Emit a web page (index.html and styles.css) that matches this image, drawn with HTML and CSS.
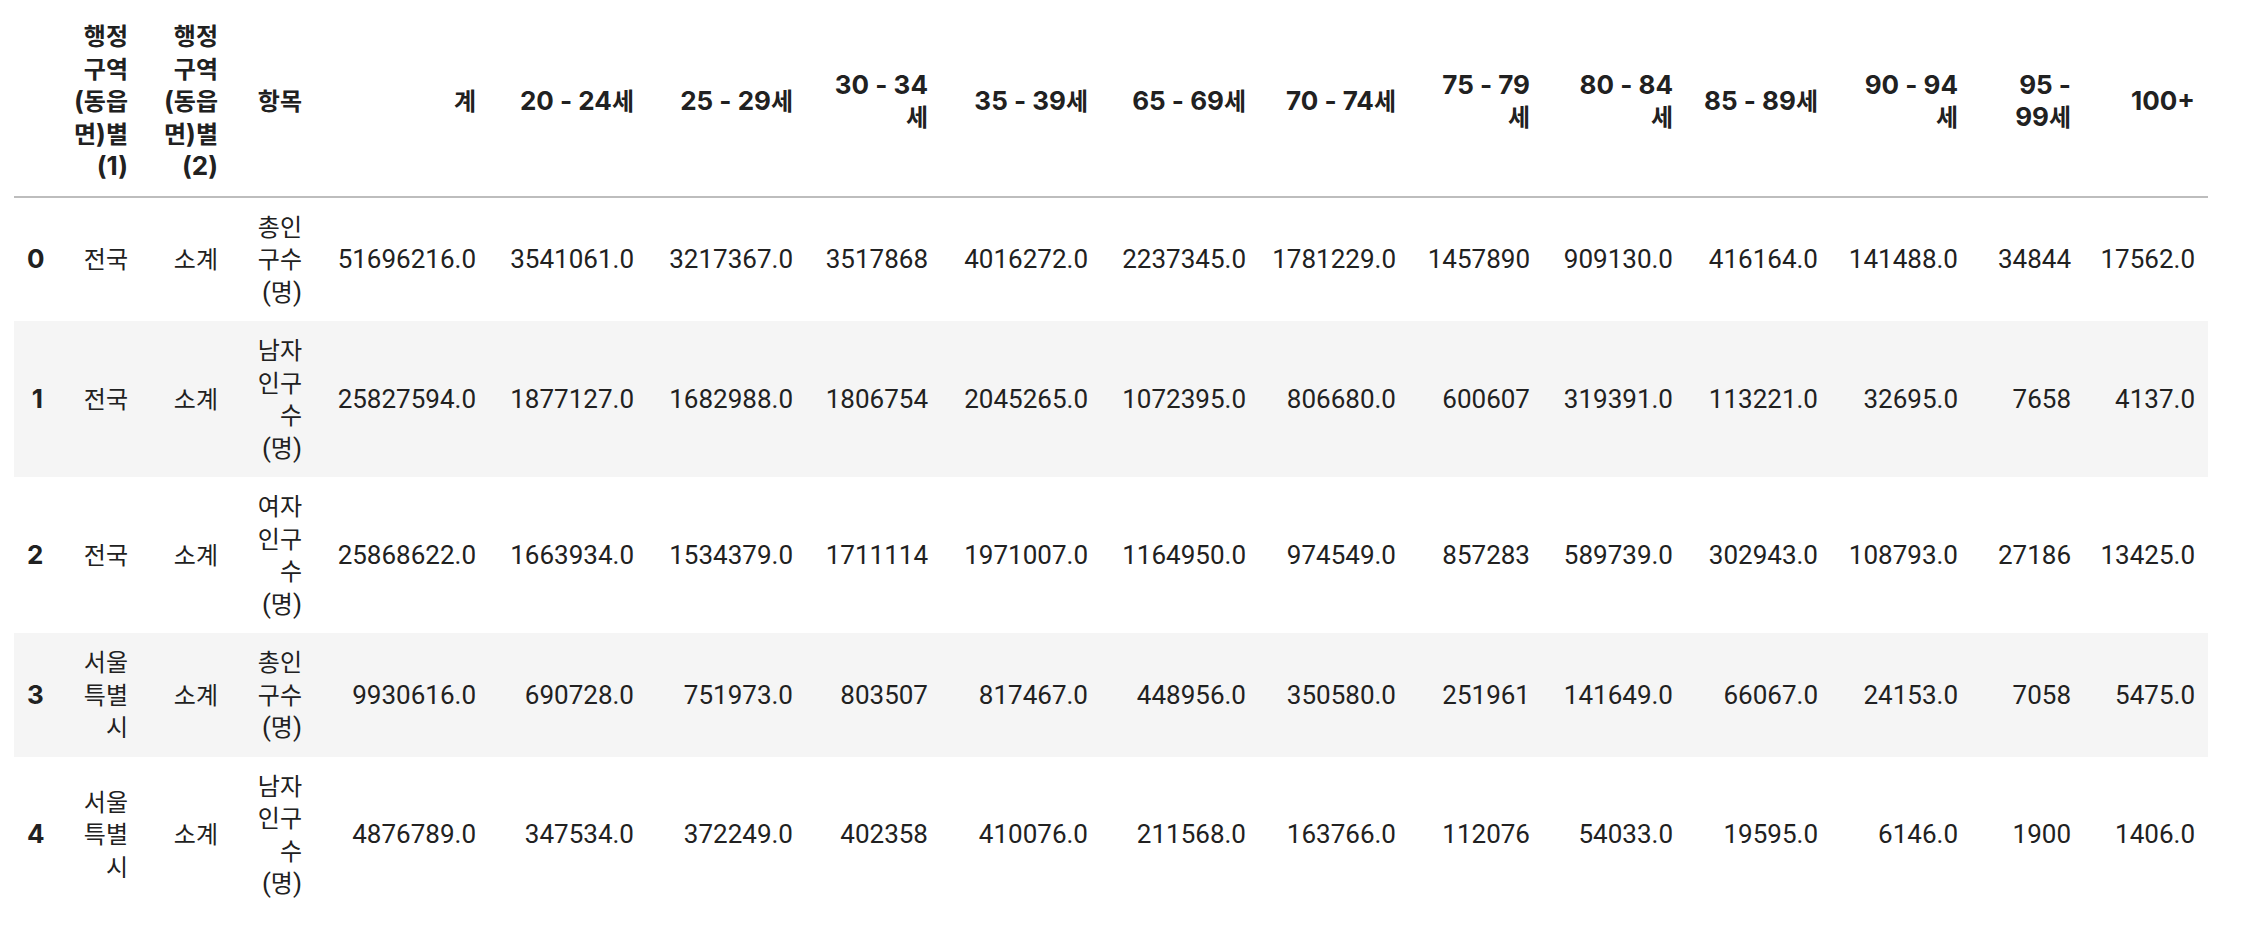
FILE: index.html
```html
<!DOCTYPE html>
<html lang="ko">
<head>
<meta charset="utf-8">
<title>DataFrame</title>
<link rel="stylesheet" href="styles.css">
</head>
<body>
<div class="output">
<table class="dataframe">
  <colgroup>
    <col class="col-index">
    <col class="col-region1">
    <col class="col-region2">
    <col class="col-item">
    <col class="col-total">
    <col class="col-a20">
    <col class="col-a25">
    <col class="col-a30">
    <col class="col-a35">
    <col class="col-a65">
    <col class="col-a70">
    <col class="col-a75">
    <col class="col-a80">
    <col class="col-a85">
    <col class="col-a90">
    <col class="col-a95">
    <col class="col-a100">
  </colgroup>
  <thead>
    <tr>
      <th></th>
      <th class="wrap"><span class="ko">행정구역</span>(<span class="ko">동읍면</span>)<span class="ko">별</span>(1)</th>
      <th class="wrap"><span class="ko">행정구역</span>(<span class="ko">동읍면</span>)<span class="ko">별</span>(2)</th>
      <th class="wrap"><span class="ko">항목</span></th>
      <th><span class="ko">계</span></th>
      <th>20 - 24<span class="ko">세</span></th>
      <th>25 - 29<span class="ko">세</span></th>
      <th>30 - 34<br><span class="ko">세</span></th>
      <th>35 - 39<span class="ko">세</span></th>
      <th>65 - 69<span class="ko">세</span></th>
      <th>70 - 74<span class="ko">세</span></th>
      <th>75 - 79<br><span class="ko">세</span></th>
      <th>80 - 84<br><span class="ko">세</span></th>
      <th>85 - 89<span class="ko">세</span></th>
      <th>90 - 94<br><span class="ko">세</span></th>
      <th>95 -<br>99<span class="ko">세</span></th>
      <th>100+</th>
    </tr>
  </thead>
  <tbody>
    <tr>
      <th>0</th>
      <td><span class="ko">전국</span></td>
      <td><span class="ko">소계</span></td>
      <td><span class="ko">총인구수</span>(<span class="ko">명</span>)</td>
      <td>51696216.0</td><td>3541061.0</td><td>3217367.0</td><td>3517868</td><td>4016272.0</td><td>2237345.0</td><td>1781229.0</td><td>1457890</td><td>909130.0</td><td>416164.0</td><td>141488.0</td><td>34844</td><td>17562.0</td>
    </tr>
    <tr>
      <th>1</th>
      <td><span class="ko">전국</span></td>
      <td><span class="ko">소계</span></td>
      <td><span class="ko">남자인구수</span>(<span class="ko">명</span>)</td>
      <td>25827594.0</td><td>1877127.0</td><td>1682988.0</td><td>1806754</td><td>2045265.0</td><td>1072395.0</td><td>806680.0</td><td>600607</td><td>319391.0</td><td>113221.0</td><td>32695.0</td><td>7658</td><td>4137.0</td>
    </tr>
    <tr>
      <th>2</th>
      <td><span class="ko">전국</span></td>
      <td><span class="ko">소계</span></td>
      <td><span class="ko">여자인구수</span>(<span class="ko">명</span>)</td>
      <td>25868622.0</td><td>1663934.0</td><td>1534379.0</td><td>1711114</td><td>1971007.0</td><td>1164950.0</td><td>974549.0</td><td>857283</td><td>589739.0</td><td>302943.0</td><td>108793.0</td><td>27186</td><td>13425.0</td>
    </tr>
    <tr>
      <th>3</th>
      <td><span class="ko">서울특별시</span></td>
      <td><span class="ko">소계</span></td>
      <td><span class="ko">총인구수</span>(<span class="ko">명</span>)</td>
      <td>9930616.0</td><td>690728.0</td><td>751973.0</td><td>803507</td><td>817467.0</td><td>448956.0</td><td>350580.0</td><td>251961</td><td>141649.0</td><td>66067.0</td><td>24153.0</td><td>7058</td><td>5475.0</td>
    </tr>
    <tr>
      <th>4</th>
      <td><span class="ko">서울특별시</span></td>
      <td><span class="ko">소계</span></td>
      <td><span class="ko">남자인구수</span>(<span class="ko">명</span>)</td>
      <td>4876789.0</td><td>347534.0</td><td>372249.0</td><td>402358</td><td>410076.0</td><td>211568.0</td><td>163766.0</td><td>112076</td><td>54033.0</td><td>19595.0</td><td>6146.0</td><td>1900</td><td>1406.0</td>
    </tr>
  </tbody>
</table>
</div>
</body>
</html>
```

FILE: styles.css
```css
html, body {
  margin: 0;
  padding: 0;
  background: #ffffff;
}

body {
  font-family: Roboto, "Noto Sans CJK KR", sans-serif;
  color: #212121;
}

.output {
  padding: 7px 14px 0 14px;
}

.dataframe {
  table-layout: fixed;
  width: 2194px;
  border-collapse: collapse;
  border-spacing: 0;
  border: none;
  font-size: 26px;
  line-height: 32.5px;
}

.dataframe th,
.dataframe td {
  padding: 13px;
  text-align: right;
  vertical-align: middle;
  white-space: nowrap;
}

.dataframe tr > :nth-child(3) {
  padding-left: 22px;
}

.dataframe th {
  font-family: Inter, "Noto Sans CJK KR", sans-serif;
  font-weight: 700;
}

.dataframe td {
  font-weight: 400;
}

.dataframe td:nth-child(-n+4),
.dataframe th.wrap {
  white-space: normal;
}

.dataframe thead th {
  border-bottom: 2px solid #bdbdbd;
}

.dataframe tbody tr:nth-child(even) {
  background: #f5f5f5;
}

.ko {
  font-family: "Noto Sans CJK KR", sans-serif;
  font-size: 24px;
  line-height: 1;
}

.col-index { width: 42px; }
.col-region1 { width: 85px; }
.col-region2 { width: 90px; }
.col-item { width: 84px; }
.col-total { width: 174px; }
.col-a20 { width: 158px; }
.col-a25 { width: 159px; }
.col-a30 { width: 135px; }
.col-a35 { width: 160px; }
.col-a65 { width: 158px; }
.col-a70 { width: 150px; }
.col-a75 { width: 134px; }
.col-a80 { width: 143px; }
.col-a85 { width: 145px; }
.col-a90 { width: 140px; }
.col-a95 { width: 113px; }
.col-a100 { width: 124px; }
```
